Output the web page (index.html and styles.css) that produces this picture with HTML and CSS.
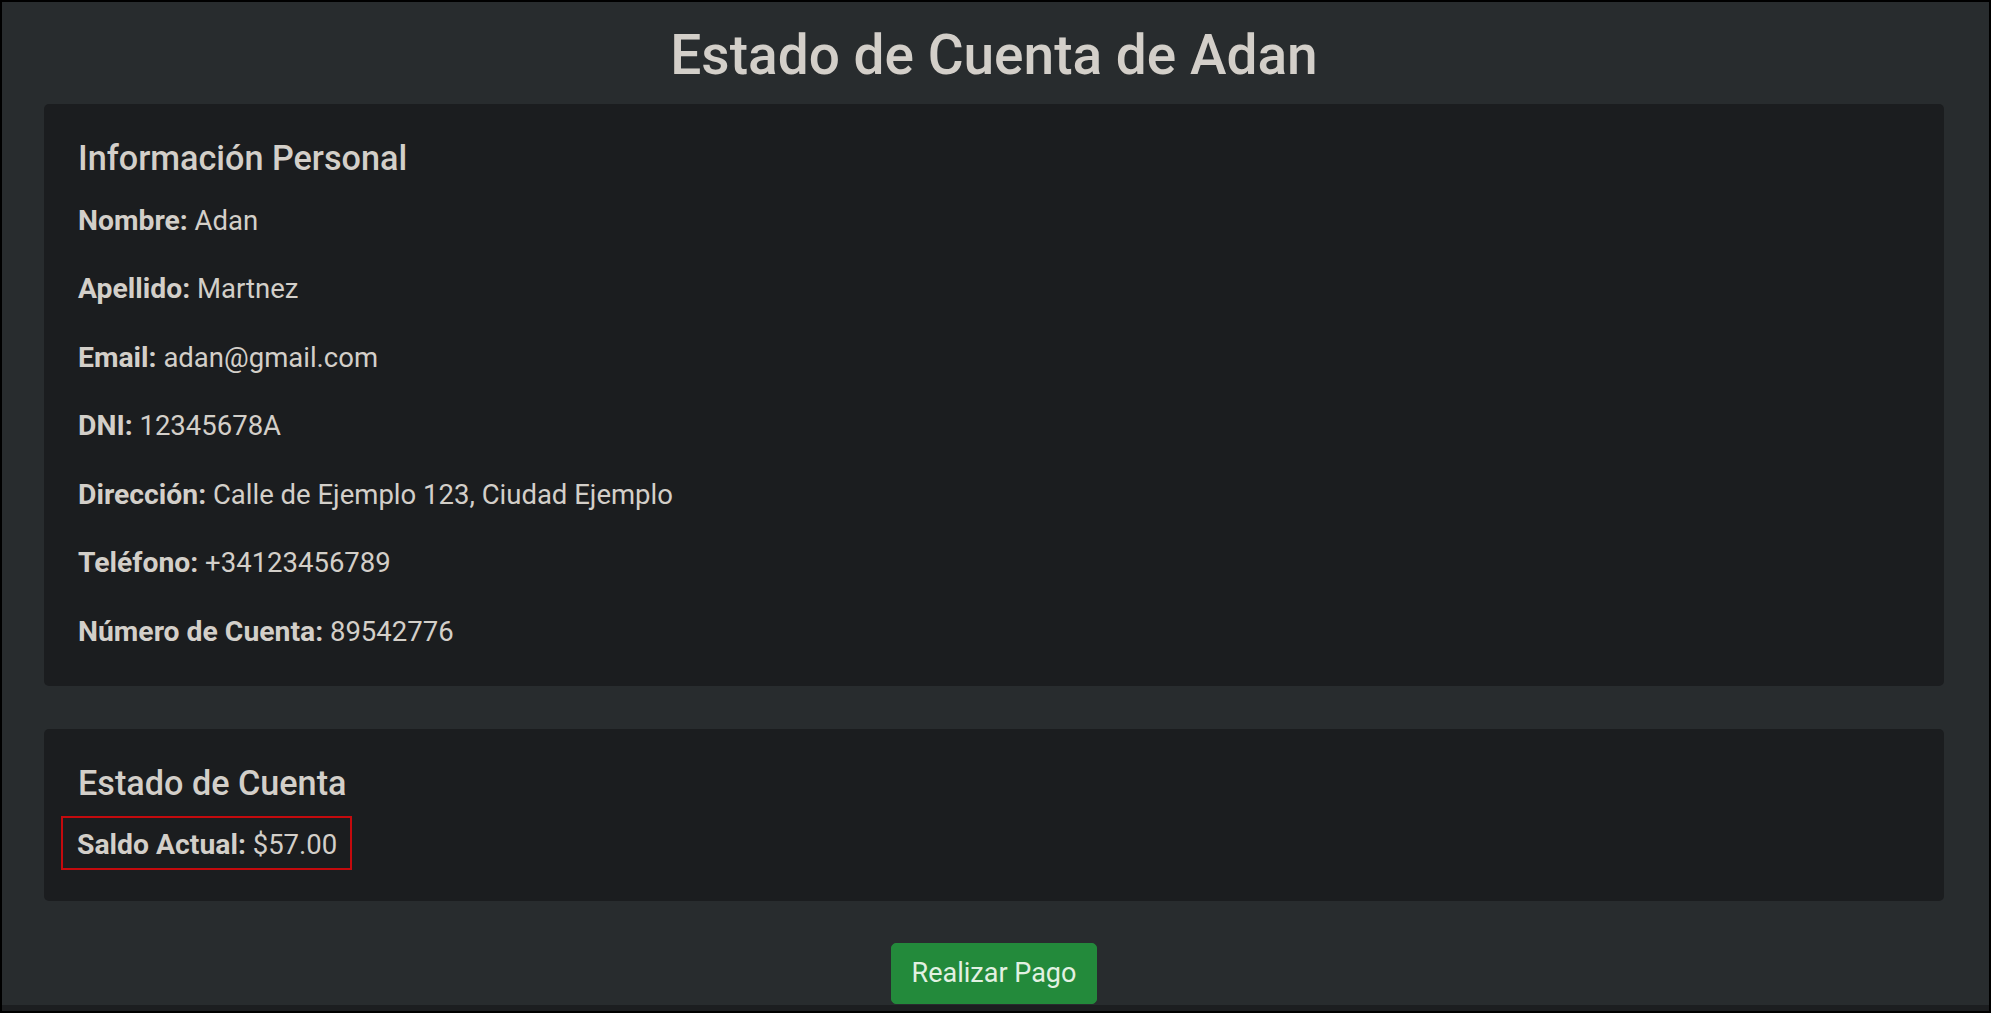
FILE: index.html
```html
<!DOCTYPE html>
<html lang="es">
<head>
    <meta charset="UTF-8">
    <meta name="viewport" content="width=device-width, initial-scale=1.0">
    <title>Estado de Cuenta</title>
    <link rel="stylesheet" href="styles.css">
</head>
<body>
    <div class="frame">
        <div class="page">
            <h1 class="title">Estado de Cuenta de Adan</h1>

            <div class="card">
                <h2>Información Personal</h2>
                <p><strong>Nombre:</strong> Adan</p>
                <p><strong>Apellido:</strong> Martnez</p>
                <p><strong>Email:</strong> adan@gmail.com</p>
                <p><strong>DNI:</strong> 12345678A</p>
                <p><strong>Dirección:</strong> Calle de Ejemplo 123, Ciudad Ejemplo</p>
                <p><strong>Teléfono:</strong> +34123456789</p>
                <p><strong>Número de Cuenta:</strong> 89542776</p>
            </div>

            <div class="card card-saldo">
                <h2>Estado de Cuenta</h2>
                <p class="saldo"><strong>Saldo Actual:</strong> $57.00</p>
            </div>

            <div class="acciones">
                <button type="button" class="btn-pago">Realizar Pago</button>
            </div>
        </div>
        <div class="bottom-bar"></div>
    </div>
</body>
</html>
```

FILE: styles.css
```css
html,
body {
    margin: 0;
    padding: 0;
    background-color: #000;
}

body {
    font-family: Roboto, "Liberation Sans", Arial, sans-serif;
    color: #d3cfc9;
}

.frame {
    height: 100vh;
    box-sizing: border-box;
    border: 2px solid #000;
    display: flex;
    flex-direction: column;
}

.page {
    flex: 1;
    overflow: hidden;
    background-color: #282c2e;
    padding: 0 45px 0 42px;
}

.bottom-bar {
    height: 6px;
    background-color: #1c1e20;
}

.title {
    font-size: 55px;
    font-weight: 500;
    line-height: 66px;
    text-align: center;
    margin: 20px 0 16px;
}

.card {
    background-color: #1b1d1f;
    border-radius: 5px;
    padding: 33.5px 34px 34px;
}

.card h2 {
    font-size: 34.2px;
    font-weight: 500;
    line-height: 41px;
    margin: 0 0 21px;
}

.card p {
    font-size: 27.5px;
    line-height: 41px;
    margin: 0 0 27.6px;
}

.card p:last-child {
    margin-bottom: 0;
}

.card strong {
    font-weight: 700;
    font-size: 1.03em;
}

.card-saldo {
    margin-top: 43px;
    padding-bottom: 31px;
}

.card-saldo h2 {
    margin-bottom: 12px;
}

.card .saldo {
    display: inline-block;
    margin-left: -17px;
    padding: 6px 13px 3px 14px;
    border: 2px solid #c40a0d;
}

.acciones {
    text-align: center;
    margin-top: 42px;
}

.btn-pago {
    font-family: Roboto, "Liberation Sans", Arial, sans-serif;
    font-size: 27px;
    line-height: 41px;
    padding: 9px 20px;
    border: 1px solid #238a3b;
    border-radius: 5px;
    background-color: #238a3b;
    color: #e2f1e2;
    cursor: pointer;
}
```
